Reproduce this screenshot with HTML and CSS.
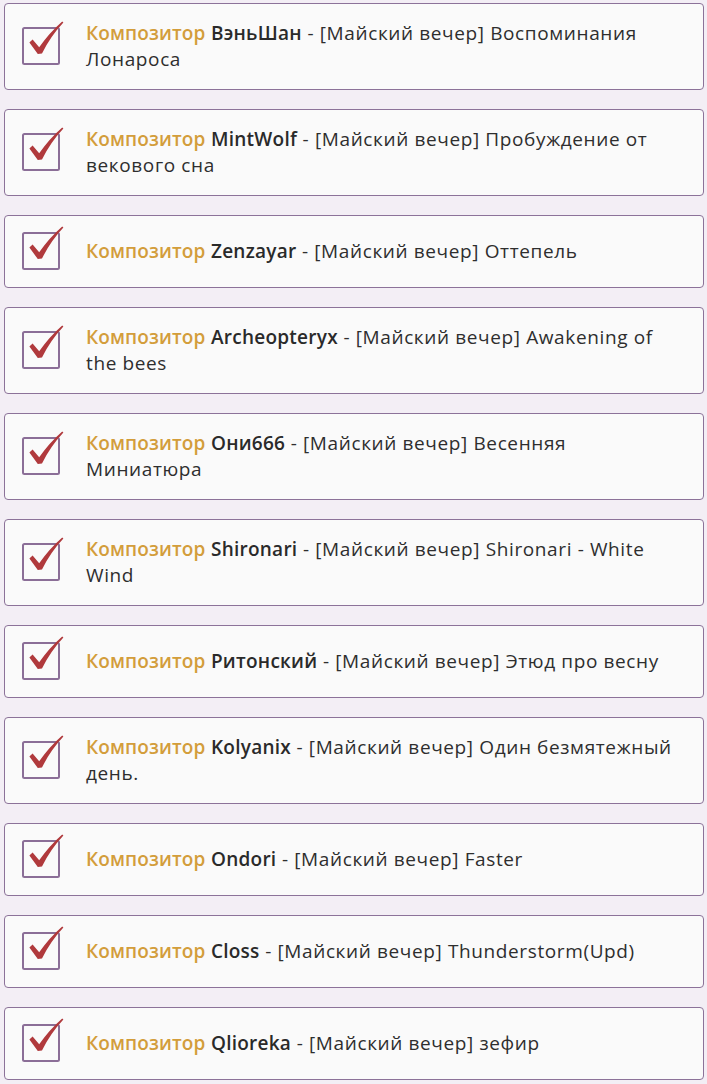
FILE: index.html
```html
<!DOCTYPE html>
<html lang="ru">
<head>
<meta charset="utf-8">
<link rel="stylesheet" href="styles.css">
</head>
<body>
<ul class="list">
  <li class="card"><svg class="check" viewBox="0 0 38 38" width="38" height="38"><rect x="1" y="1" width="36" height="36" rx="1.5" class="box"/><path class="mark" d="M7.4 15.6 L10.6 12.6 L17.2 20.2 Q27 6 40.2 -5.6 L41.4 -4.4 Q28 10 20 26.6 L15.8 27 Z"/></svg><p class="text"><span class="role">Композитор</span> <b class="name">ВэньШан</b> - [Майский вечер] Воспоминания Лонароса</p></li>
  <li class="card"><svg class="check" viewBox="0 0 38 38" width="38" height="38"><rect x="1" y="1" width="36" height="36" rx="1.5" class="box"/><path class="mark" d="M7.4 15.6 L10.6 12.6 L17.2 20.2 Q27 6 40.2 -5.6 L41.4 -4.4 Q28 10 20 26.6 L15.8 27 Z"/></svg><p class="text"><span class="role">Композитор</span> <b class="name">MintWolf</b> - [Майский вечер] Пробуждение от векового сна</p></li>
  <li class="card"><svg class="check" viewBox="0 0 38 38" width="38" height="38"><rect x="1" y="1" width="36" height="36" rx="1.5" class="box"/><path class="mark" d="M7.4 15.6 L10.6 12.6 L17.2 20.2 Q27 6 40.2 -5.6 L41.4 -4.4 Q28 10 20 26.6 L15.8 27 Z"/></svg><p class="text"><span class="role">Композитор</span> <b class="name">Zenzayar</b> - [Майский вечер] Оттепель</p></li>
  <li class="card"><svg class="check" viewBox="0 0 38 38" width="38" height="38"><rect x="1" y="1" width="36" height="36" rx="1.5" class="box"/><path class="mark" d="M7.4 15.6 L10.6 12.6 L17.2 20.2 Q27 6 40.2 -5.6 L41.4 -4.4 Q28 10 20 26.6 L15.8 27 Z"/></svg><p class="text"><span class="role">Композитор</span> <b class="name">Archeopteryx</b> - [Майский вечер] Awakening of the bees</p></li>
  <li class="card"><svg class="check" viewBox="0 0 38 38" width="38" height="38"><rect x="1" y="1" width="36" height="36" rx="1.5" class="box"/><path class="mark" d="M7.4 15.6 L10.6 12.6 L17.2 20.2 Q27 6 40.2 -5.6 L41.4 -4.4 Q28 10 20 26.6 L15.8 27 Z"/></svg><p class="text"><span class="role">Композитор</span> <b class="name">Они666</b> - [Майский вечер] Весенняя Миниатюра</p></li>
  <li class="card"><svg class="check" viewBox="0 0 38 38" width="38" height="38"><rect x="1" y="1" width="36" height="36" rx="1.5" class="box"/><path class="mark" d="M7.4 15.6 L10.6 12.6 L17.2 20.2 Q27 6 40.2 -5.6 L41.4 -4.4 Q28 10 20 26.6 L15.8 27 Z"/></svg><p class="text"><span class="role">Композитор</span> <b class="name">Shironari</b> - [Майский вечер] Shironari - White Wind</p></li>
  <li class="card"><svg class="check" viewBox="0 0 38 38" width="38" height="38"><rect x="1" y="1" width="36" height="36" rx="1.5" class="box"/><path class="mark" d="M7.4 15.6 L10.6 12.6 L17.2 20.2 Q27 6 40.2 -5.6 L41.4 -4.4 Q28 10 20 26.6 L15.8 27 Z"/></svg><p class="text"><span class="role">Композитор</span> <b class="name">Ритонский</b> - [Майский вечер] Этюд про весну</p></li>
  <li class="card"><svg class="check" viewBox="0 0 38 38" width="38" height="38"><rect x="1" y="1" width="36" height="36" rx="1.5" class="box"/><path class="mark" d="M7.4 15.6 L10.6 12.6 L17.2 20.2 Q27 6 40.2 -5.6 L41.4 -4.4 Q28 10 20 26.6 L15.8 27 Z"/></svg><p class="text"><span class="role">Композитор</span> <b class="name">Kolyanix</b> - [Майский вечер] Один безмятежный день.</p></li>
  <li class="card"><svg class="check" viewBox="0 0 38 38" width="38" height="38"><rect x="1" y="1" width="36" height="36" rx="1.5" class="box"/><path class="mark" d="M7.4 15.6 L10.6 12.6 L17.2 20.2 Q27 6 40.2 -5.6 L41.4 -4.4 Q28 10 20 26.6 L15.8 27 Z"/></svg><p class="text"><span class="role">Композитор</span> <b class="name">Ondori</b> - [Майский вечер] Faster</p></li>
  <li class="card"><svg class="check" viewBox="0 0 38 38" width="38" height="38"><rect x="1" y="1" width="36" height="36" rx="1.5" class="box"/><path class="mark" d="M7.4 15.6 L10.6 12.6 L17.2 20.2 Q27 6 40.2 -5.6 L41.4 -4.4 Q28 10 20 26.6 L15.8 27 Z"/></svg><p class="text"><span class="role">Композитор</span> <b class="name">Closs</b> - [Майский вечер] Thunderstorm(Upd)</p></li>
  <li class="card"><svg class="check" viewBox="0 0 38 38" width="38" height="38"><rect x="1" y="1" width="36" height="36" rx="1.5" class="box"/><path class="mark" d="M7.4 15.6 L10.6 12.6 L17.2 20.2 Q27 6 40.2 -5.6 L41.4 -4.4 Q28 10 20 26.6 L15.8 27 Z"/></svg><p class="text"><span class="role">Композитор</span> <b class="name">Qlioreka</b> - [Майский вечер] зефир</p></li>
</ul>
</body>
</html>
```

FILE: styles.css
```css
html, body {
  margin: 0;
  padding: 0;
  background: #f3eef5;
}
body {
  font-family: "Open Sans", "Noto Sans", sans-serif;
  color: #2e2e2e;
}
.list {
  list-style: none;
  margin: 0;
  padding: 3px 3px 0 4px;
  display: flex;
  flex-direction: column;
  gap: 19px;
}
.card {
  display: flex;
  align-items: center;
  gap: 26px;
  padding: 16px 21px 17px 17px;
  background: #fafafa;
  border: 1px solid #8c7299;
  border-radius: 4px;
}
.check {
  flex: none;
  overflow: visible;
}
.box {
  fill: none;
  stroke: #8b6e97;
  stroke-width: 2;
}
.mark {
  fill: #b0393c;
}
.text {
  margin: 0;
  font-size: 19px;
  line-height: 26px;
  letter-spacing: 0.62px;
}
.role {
  color: #d39d3b;
  font-weight: 600;
  letter-spacing: 0.1px;
}
.name {
  font-weight: 600;
  color: #2a2a2a;
  letter-spacing: 0.25px;
}
```
